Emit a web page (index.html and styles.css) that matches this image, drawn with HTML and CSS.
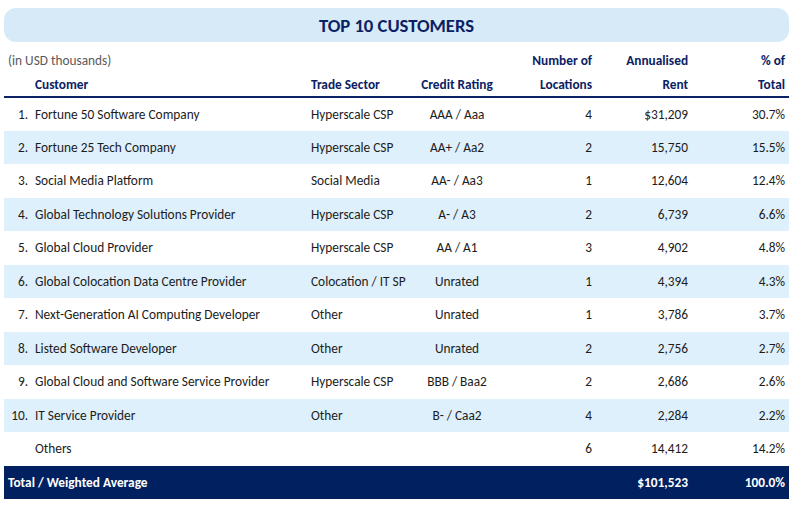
FILE: index.html
```html
<!DOCTYPE html>
<html lang="en">
<head>
<meta charset="utf-8">
<title>Top 10 Customers</title>
<link rel="stylesheet" href="styles.css">
</head>
<body>
<div class="panel">
  <div class="banner"><h1 class="title">TOP 10 CUSTOMERS</h1></div>
  <table class="customers">
    <colgroup>
      <col class="c-num"><col class="c-name"><col class="c-sector"><col class="c-rating"><col class="c-loc"><col class="c-rent"><col class="c-pct">
    </colgroup>
    <thead>
      <tr class="head1">
        <th colspan="4" class="units">(in USD thousands)</th>
        <th class="r">Number of</th>
        <th class="r">Annualised</th>
        <th class="r">% of</th>
      </tr>
      <tr class="head2">
        <th></th>
        <th class="l name">Customer</th>
        <th class="l">Trade Sector</th>
        <th class="c">Credit Rating</th>
        <th class="r">Locations</th>
        <th class="r">Rent</th>
        <th class="r">Total</th>
      </tr>
    </thead>
    <tbody>
      <tr><td class="num">1.</td><td class="name">Fortune 50 Software Company</td><td>Hyperscale CSP</td><td class="c">AAA / Aaa</td><td class="r">4</td><td class="r">$31,209</td><td class="r">30.7%</td></tr>
      <tr class="alt"><td class="num">2.</td><td class="name">Fortune 25 Tech Company</td><td>Hyperscale CSP</td><td class="c">AA+ / Aa2</td><td class="r">2</td><td class="r">15,750</td><td class="r">15.5%</td></tr>
      <tr><td class="num">3.</td><td class="name">Social Media Platform</td><td>Social Media</td><td class="c">AA- / Aa3</td><td class="r">1</td><td class="r">12,604</td><td class="r">12.4%</td></tr>
      <tr class="alt"><td class="num">4.</td><td class="name">Global Technology Solutions Provider</td><td>Hyperscale CSP</td><td class="c">A- / A3</td><td class="r">2</td><td class="r">6,739</td><td class="r">6.6%</td></tr>
      <tr><td class="num">5.</td><td class="name">Global Cloud Provider</td><td>Hyperscale CSP</td><td class="c">AA / A1</td><td class="r">3</td><td class="r">4,902</td><td class="r">4.8%</td></tr>
      <tr class="alt"><td class="num">6.</td><td class="name">Global Colocation Data Centre Provider</td><td>Colocation / IT SP</td><td class="c">Unrated</td><td class="r">1</td><td class="r">4,394</td><td class="r">4.3%</td></tr>
      <tr><td class="num">7.</td><td class="name">Next-Generation AI Computing Developer</td><td>Other</td><td class="c">Unrated</td><td class="r">1</td><td class="r">3,786</td><td class="r">3.7%</td></tr>
      <tr class="alt"><td class="num">8.</td><td class="name">Listed Software Developer</td><td>Other</td><td class="c">Unrated</td><td class="r">2</td><td class="r">2,756</td><td class="r">2.7%</td></tr>
      <tr><td class="num">9.</td><td class="name">Global Cloud and Software Service Provider</td><td>Hyperscale CSP</td><td class="c">BBB / Baa2</td><td class="r">2</td><td class="r">2,686</td><td class="r">2.6%</td></tr>
      <tr class="alt"><td class="num">10.</td><td class="name">IT Service Provider</td><td>Other</td><td class="c">B- / Caa2</td><td class="r">4</td><td class="r">2,284</td><td class="r">2.2%</td></tr>
      <tr><td class="num"></td><td class="name">Others</td><td></td><td class="c"></td><td class="r">6</td><td class="r">14,412</td><td class="r">14.2%</td></tr>
    </tbody>
    <tfoot>
      <tr class="total"><td colspan="5" class="total-label">Total / Weighted Average</td><td class="r">$101,523</td><td class="r">100.0%</td></tr>
    </tfoot>
  </table>
</div>
</body>
</html>
```
FILE: styles.css
```css
html, body {
  margin: 0;
  padding: 0;
  background: #ffffff;
}
body {
  font-family: "Carlito", "Liberation Sans", Arial, sans-serif;
  font-size: 13.33px;
  color: #1c1c1c;
}
.panel {
  width: 785px;
  padding: 8px 0 0 4px;
}
.banner {
  height: 34px;
  background: #d6eaf8;
  border-radius: 12px;
  display: flex;
  align-items: center;
  justify-content: center;
}
.title {
  margin: 0;
  font-size: 18.67px;
  font-weight: bold;
  color: #0b2163;
}
.customers {
  width: 785px;
  margin-top: 6px;
  border-collapse: collapse;
  table-layout: fixed;
}
.c-num { width: 27px; }
.c-name { width: 276px; }
.c-sector { width: 94px; }
.c-rating { width: 112px; }
.c-loc { width: 83px; }
.c-rent { width: 96px; }
.c-pct { width: 97px; }
.customers th {
  font-weight: bold;
  color: #0b2163;
  height: 24px;
  padding: 0 4px;
  vertical-align: middle;
  white-space: nowrap;
}
.customers th.units {
  font-weight: normal;
  color: #595959;
  text-align: left;
  padding-left: 4px;
}
.head2 th {
  border-bottom: 2.5px solid #0b2163;
}
.customers td {
  height: 33.5px;
  padding: 0 4px;
  vertical-align: middle;
  white-space: nowrap;
  box-sizing: border-box;
}
.customers th.name,
.customers td.name { padding-left: 4px; }
.customers td.num {
  text-align: right;
  padding: 0 3px 0 0;
}
.l { text-align: left; }
.c { text-align: center; }
.r { text-align: right; }
.customers th.c, .customers td.c { padding: 0; }
.alt td { background: #def0fb; }
.total td {
  background: #002060;
  color: #ffffff;
  font-weight: bold;
  height: 33px;
}
.customers td.total-label { padding-left: 4px; }
```
